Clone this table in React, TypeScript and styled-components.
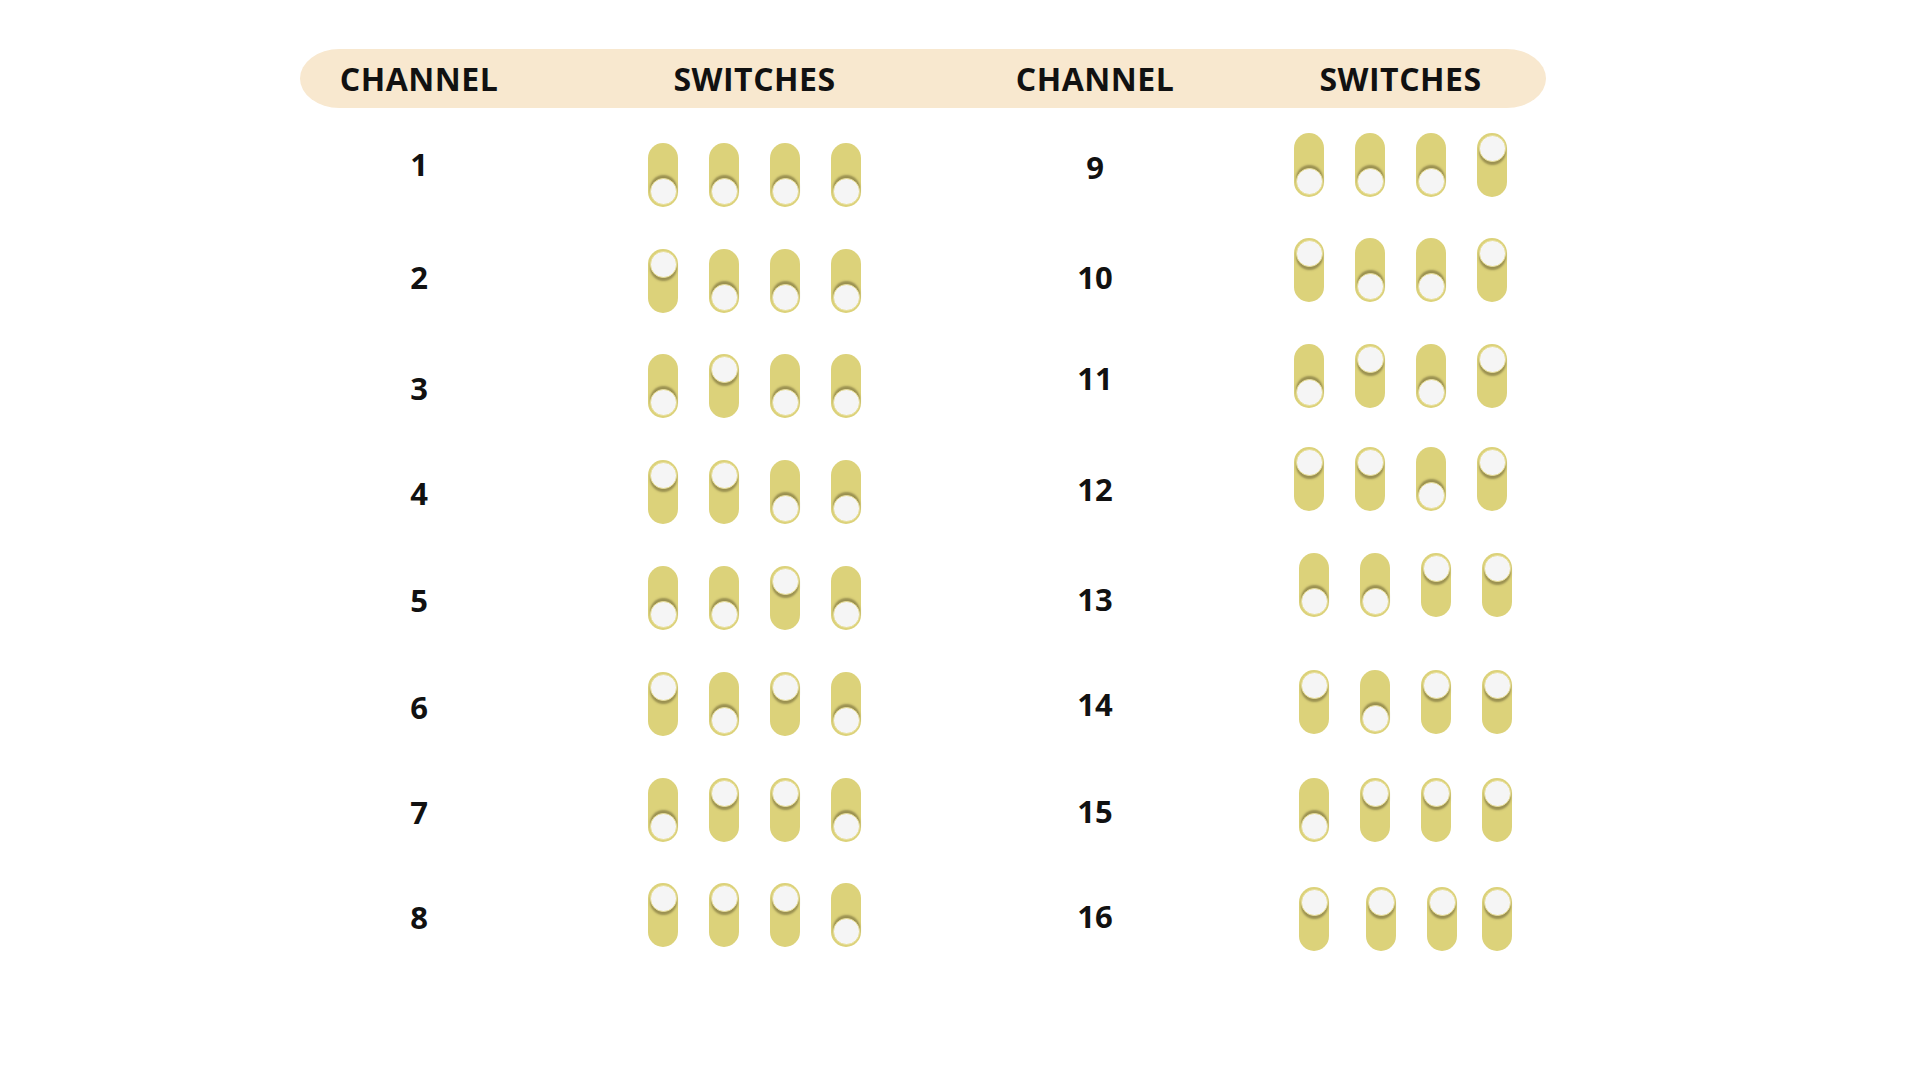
import React from 'react';
import styled, { createGlobalStyle } from 'styled-components';

const GlobalStyle = createGlobalStyle`
  html, body {
    margin: 0;
    padding: 0;
    background: #ffffff;
  }
  body {
    font-family: 'Open Sans', 'Noto Sans', sans-serif;
    color: #111111;
  }
`;

type Row = { ch: number; h: number; ny: number; offset: number; shifts?: number[] };

// channel rows, heights are the distance to the next row
const leftRows: Row[] = [
  { ch: 1, h: 106, ny: -11, offset: 105 },
  { ch: 2, h: 105, ny: -4, offset: 105 },
  { ch: 3, h: 106, ny: 2, offset: 105 },
  { ch: 4, h: 106, ny: 1, offset: 105 },
  { ch: 5, h: 106, ny: 2, offset: 105 },
  { ch: 6, h: 106, ny: 3, offset: 105 },
  { ch: 7, h: 105, ny: 2, offset: 105 },
  { ch: 8, h: 64, ny: 2, offset: 105 },
];

const rightRows: Row[] = [
  { ch: 9, h: 105, ny: 2, offset: 75 },
  { ch: 10, h: 106, ny: 7, offset: 75 },
  { ch: 11, h: 103, ny: 2, offset: 75 },
  { ch: 12, h: 106, ny: 10, offset: 75 },
  { ch: 13, h: 117, ny: 14, offset: 80 },
  { ch: 14, h: 108, ny: 2, offset: 80 },
  { ch: 15, h: 109, ny: 1, offset: 80 },
  { ch: 16, h: 64, ny: -3, offset: 80, shifts: [0, 6, 0, -6] },
];

const App = () => {
  return (
    <Page>
      <GlobalStyle />
      <Table>
        <Header>
          <HeadHalf $w={671}>
            <HeadCell $w={238}>CHANNEL</HeadCell>
            <HeadCell $w={213} $ml={110}>SWITCHES</HeadCell>
          </HeadHalf>
          <HeadHalf $w={575}>
            <HeadCell $w={248}>CHANNEL</HeadCell>
            <HeadCell $w={213} $ml={75}>SWITCHES</HeadCell>
          </HeadHalf>
        </Header>
        <Body>
          <Panel $w={676} $top={35}>
            {leftRows.map(r => (
              <ChannelRow key={r.ch} row={r} />
            ))}
          </Panel>
          <Panel $w={575} $top={25}>
            {rightRows.map(r => (
              <ChannelRow key={r.ch} row={r} />
            ))}
          </Panel>
        </Body>
      </Table>
    </Page>
  );
};

const ChannelRow = ({ row }: { row: Row }) => {
  const bits = [0, 1, 2, 3].map(i => (((row.ch - 1) >> i) & 1) === 1);
  return (
    <RowWrap $h={row.h}>
      <Number $ny={row.ny}>{row.ch}</Number>
      <Switches $ml={row.offset}>
        {bits.map((up, i) => (
          <Track key={i} $up={up} $shift={row.shifts ? row.shifts[i] : 0}>
            <Knob $up={up} />
          </Track>
        ))}
      </Switches>
    </RowWrap>
  );
};

export default App;

const Page = styled.div`
  min-height: 1080px;
  padding-top: 49px;
  padding-left: 295px;
  box-sizing: border-box;
`;

const Table = styled.div`
  width: 1251px;
`;

const Header = styled.div`
  display: flex;
  height: 59px;
  margin-left: 5px;
  background: #f8e8cf;
  border-radius: 40px / 30px;
`;

const HeadHalf = styled.div<{ $w: number }>`
  display: flex;
  align-items: center;
  width: ${p => p.$w}px;
  flex-shrink: 0;
`;

const HeadCell = styled.div<{ $w: number; $ml?: number }>`
  width: ${p => p.$w}px;
  margin-left: ${p => p.$ml || 0}px;
  flex-shrink: 0;
  text-align: center;
  white-space: nowrap;
  font-size: 32px;
  font-weight: 700;
  line-height: 1;
  letter-spacing: 0.5px;
`;

const Body = styled.div`
  display: flex;
`;

const Panel = styled.div<{ $w: number; $top: number }>`
  width: ${p => p.$w}px;
  padding-top: ${p => p.$top}px;
  flex-shrink: 0;
`;

const RowWrap = styled.div<{ $h: number }>`
  display: flex;
  align-items: flex-start;
  height: ${p => p.$h}px;
`;

const Number = styled.div<{ $ny: number }>`
  width: 248px;
  height: 64px;
  margin-top: ${p => p.$ny}px;
  display: flex;
  align-items: center;
  justify-content: center;
  font-size: 31px;
  font-weight: 700;
  line-height: 1;
`;

const Switches = styled.div<{ $ml: number }>`
  display: flex;
  gap: 31px;
  margin-left: ${p => p.$ml}px;
`;

const Track = styled.div<{ $up: boolean; $shift: number }>`
  width: 30px;
  height: 64px;
  box-sizing: border-box;
  margin-left: ${p => p.$shift}px;
  padding: 2px 0;
  border-radius: 15px;
  background: #dcd27a;
  display: flex;
  flex-direction: column;
  align-items: center;
  justify-content: ${p => (p.$up ? 'flex-start' : 'flex-end')};
`;

const Knob = styled.div<{ $up: boolean }>`
  width: 27px;
  height: 27px;
  box-sizing: border-box;
  border-radius: 50%;
  background: #f5f5f5;
  border: 1.5px solid #e8de96;
  box-shadow: 0 ${p => (p.$up ? '3px' : '-3px')} 2px rgba(90, 80, 40, 0.5);
`;
